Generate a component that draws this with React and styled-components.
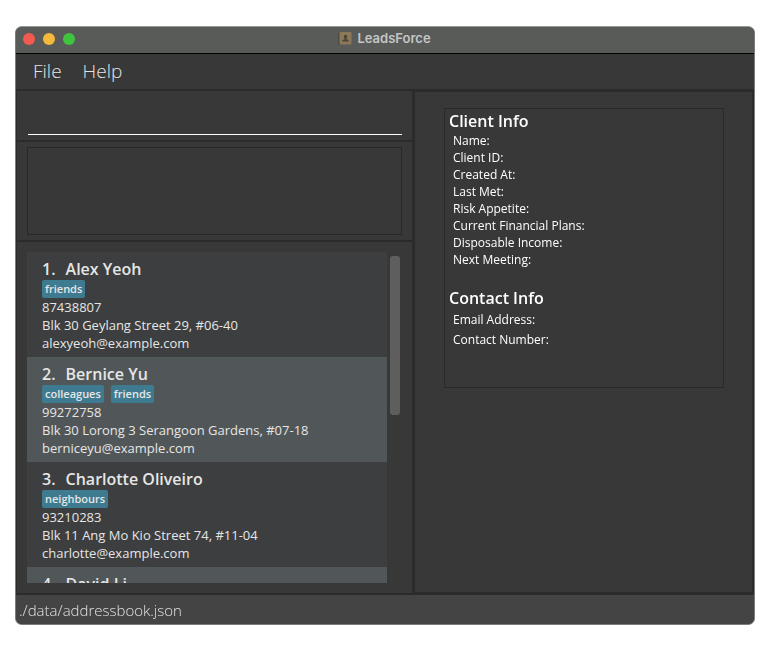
import React, { useState } from "react";
import styled, { createGlobalStyle } from "styled-components";

const GlobalStyle = createGlobalStyle`
  *, *::before, *::after { box-sizing: border-box; }
  body {
    margin: 0;
    background: #ffffff;
    font-family: "Open Sans", "Noto Sans", sans-serif;
  }
`;

const Page = styled.div`
  height: 100vh;
  min-height: 480px;
  padding: 26px 14px 27px 15px;
`;

const AppWindow = styled.div`
  display: flex;
  flex-direction: column;
  height: 100%;
  overflow: hidden;
  border: 1px solid #7b7c7c;
  border-top-color: #969898;
  border-radius: 7px;
  background: #383838;
`;

const TitleBar = styled.header`
  display: grid;
  grid-template-columns: 1fr auto 1fr;
  align-items: center;
  height: 27px;
  flex: none;
  padding: 0 8px 0 7px;
  border-bottom: 1px solid #000000;
  background: #595b59;
`;

const Lights = styled.div`
  display: flex;
  gap: 8px;
  padding-bottom: 2px;
`;

const Light = styled.button`
  width: 12px;
  height: 12px;
  padding: 0;
  border: 0;
  border-radius: 50%;
  background: ${(p) => p.$color};
`;

const Title = styled.h1`
  display: flex;
  align-items: center;
  gap: 5px;
  margin: 0;
  padding-bottom: 4px;
  font: 600 13px/18px Inter, "Liberation Sans", sans-serif;
  color: #c5c6c5;
`;

const MenuBar = styled.nav`
  display: flex;
  flex: none;
  height: 37px;
  padding: 0 10px 2px;
  gap: 7px;
  border-bottom: 2px solid #2b2b2b;
`;

const MenuButton = styled.button`
  padding: 0 7px;
  border: 0;
  background: none;
  font: 300 19px/32px "Open Sans", sans-serif;
  color: #e4e4e4;
`;

const Body = styled.main`
  display: grid;
  grid-template-columns: minmax(0, 396fr) minmax(0, 342fr);
  flex: 1;
  min-height: 0;
`;

const LeftPane = styled.div`
  display: flex;
  flex-direction: column;
  min-width: 0;
  min-height: 0;
  border-left: 1px solid #2b2b2b;
  border-bottom: 2px solid #2b2b2b;
`;

const CommandBox = styled.div`
  flex: none;
  height: 51px;
  padding: 0 10px 5px 11px;
  border-bottom: 2px solid #2b2b2b;
`;

const CommandInput = styled.input`
  display: block;
  width: 100%;
  height: 44px;
  padding: 0;
  border: 0;
  border-bottom: 1px solid #ffffff;
  outline: 0;
  background: transparent;
  font: 300 18px "Open Sans", sans-serif;
  color: #ffffff;
`;

const ResultBox = styled.div`
  flex: none;
  height: 100px;
  padding: 5px 10px;
  border-bottom: 2px solid #2b2b2b;
`;

const ResultText = styled.textarea`
  display: block;
  width: 100%;
  height: 88px;
  padding: 4px;
  border: 1px solid #282828;
  outline: 0;
  resize: none;
  background: transparent;
  font: 300 13px/18px "Open Sans", sans-serif;
  color: #ffffff;
`;

const ListBox = styled.div`
  display: flex;
  flex: 1;
  gap: 3px;
  min-height: 0;
  padding: 10px 12px 10px 10px;
`;

const PersonList = styled.ol`
  flex: 1;
  min-width: 0;
  margin: 0;
  padding: 0;
  list-style: none;
  overflow-y: auto;
  scrollbar-width: none;
`;

const Thumb = styled.div`
  flex: none;
  width: 10px;
  height: 48%;
  margin-top: 4px;
  border-radius: 3px;
  background: #5e5e5e;
`;

const Card = styled.li`
  height: 105px;
  padding: 5px 15px;
  background: #3c3e3f;
  font-size: 13px;
  line-height: 18px;
  color: #e6e6e6;

  &:nth-child(even) { background: #515658; }
`;

const PersonName = styled.h2`
  display: flex;
  gap: 10px;
  height: 23px;
  margin: 0;
  font-size: 16px;
  font-weight: 600;
  line-height: 25px;
`;

const Tags = styled.div`
  display: flex;
  gap: 7px;
  height: 18px;
`;

const Tag = styled.span`
  padding: 0 3px;
  border-radius: 2px;
  background: #3e7b91;
  font-size: 11px;
  font-weight: 600;
  line-height: 18px;
`;

const Line = styled.div`
  white-space: nowrap;
`;

const RightPane = styled.section`
  min-width: 0;
  padding: 16px 28px 16px 29px;
  border: solid #2b2b2b;
  border-width: 1px 2px 3px 3px;
`;

const InfoBox = styled.div`
  min-height: 280px;
  padding: 1px 4px;
  border: 1px solid #2a2a2a;
  color: #ffffff;
`;

const InfoSection = styled.section`
  margin-bottom: 19px;
`;

const InfoHeading = styled.h2`
  margin: 0;
  font-size: 16px;
  font-weight: 600;
  line-height: 22px;
`;

const InfoList = styled.dl`
  display: grid;
  grid-auto-rows: ${(p) => p.$row}px;
  align-items: center;
  margin: 0;
  padding-left: 4px;
  font-size: 12px;
`;

const StatusBar = styled.footer`
  flex: none;
  height: 29px;
  padding: 0 3px;
  background: #444444;
  font-size: 15px;
  font-weight: 300;
  line-height: 30px;
  color: #e2e2e2;
`;

const people = [
  { name: "Alex Yeoh", tags: ["friends"], phone: "87438807", address: "Blk 30 Geylang Street 29, #06-40", email: "alexyeoh@example.com" },
  { name: "Bernice Yu", tags: ["colleagues", "friends"], phone: "99272758", address: "Blk 30 Lorong 3 Serangoon Gardens, #07-18", email: "berniceyu@example.com" },
  { name: "Charlotte Oliveiro", tags: ["neighbours"], phone: "93210283", address: "Blk 11 Ang Mo Kio Street 74, #11-04", email: "charlotte@example.com" },
  { name: "David Li", tags: [] },
];

const clientFields = [
  "Name:", "Client ID:", "Created At:", "Last Met:", "Risk Appetite:",
  "Current Financial Plans:", "Disposable Income:", "Next Meeting:",
];
const contactFields = ["Email Address:", "Contact Number:"];

function AppIcon() {
  return (
    <svg width="14" height="13" viewBox="0 0 14 13" aria-hidden="true">
      <rect x="0" y="0.5" width="3" height="12" rx="1" fill="#4c4a45" />
      <rect x="1.5" y="0" width="12" height="12.5" rx="1" fill="#8a7858" />
      <ellipse cx="7.5" cy="4.8" rx="1.7" ry="2.1" fill="#4b4538" />
      <path d="M6.7 6h1.6v1.3l2.3 0.7v1.5H4.4V8l2.3-0.7z" fill="#4b4538" />
    </svg>
  );
}

function PersonCard({ person, index }) {
  return (
    <Card>
      <PersonName><span>{index}.</span><span>{person.name}</span></PersonName>
      <Tags>{person.tags.map((t) => <Tag key={t}>{t}</Tag>)}</Tags>
      {person.phone && <Line>{person.phone}</Line>}
      {person.address && <Line>{person.address}</Line>}
      {person.email && <Line>{person.email}</Line>}
    </Card>
  );
}

function Info({ title, fields, row }) {
  return (
    <InfoSection>
      <InfoHeading>{title}</InfoHeading>
      <InfoList $row={row}>{fields.map((f) => <dt key={f}>{f}</dt>)}</InfoList>
    </InfoSection>
  );
}

export default function App() {
  const [command, setCommand] = useState("");
  return (
    <>
      <GlobalStyle />
      <Page>
        <AppWindow>
          <TitleBar>
            <Lights>
              <Light $color="#f35b51" aria-label="Close" />
              <Light $color="#f5b93c" aria-label="Minimise" />
              <Light $color="#3fc43e" aria-label="Zoom" />
            </Lights>
            <Title><AppIcon />LeadsForce</Title>
          </TitleBar>
          <MenuBar>
            <MenuButton>File</MenuButton>
            <MenuButton>Help</MenuButton>
          </MenuBar>
          <Body>
            <LeftPane>
              <CommandBox>
                <CommandInput aria-label="Command" value={command} onChange={(e) => setCommand(e.target.value)} />
              </CommandBox>
              <ResultBox><ResultText aria-label="Result" readOnly /></ResultBox>
              <ListBox>
                <PersonList>
                  {people.map((p, i) => <PersonCard key={p.name} person={p} index={i + 1} />)}
                </PersonList>
                <Thumb />
              </ListBox>
            </LeftPane>
            <RightPane>
              <InfoBox>
                <Info title="Client Info" fields={clientFields} row={17} />
                <Info title="Contact Info" fields={contactFields} row={20} />
              </InfoBox>
            </RightPane>
          </Body>
          <StatusBar>./data/addressbook.json</StatusBar>
        </AppWindow>
      </Page>
    </>
  );
}
